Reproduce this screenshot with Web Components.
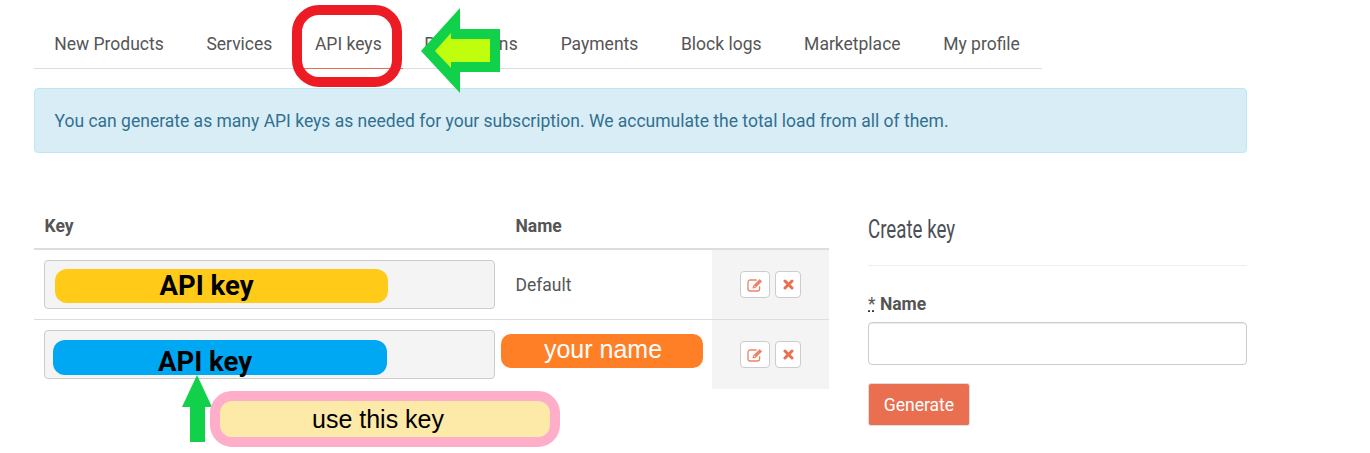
<!DOCTYPE html>
<html>
<head>
<meta charset="utf-8">
<title>API keys</title>
<style>
  html, body { margin: 0; background: #fff; }
  body { font-family: Roboto, "Liberation Sans", sans-serif; color: #555; overflow: hidden; }
</style>
</head>
<body>
<key-page></key-page>

<script>
class TabNav extends HTMLElement {
  constructor() {
    super();
    const shadowRoot = this.attachShadow({ mode: 'open' });
    const tabs = ['New Products', 'Services', 'API keys', 'Promotions', 'Payments', 'Block logs', 'Marketplace', 'My profile'];
    shadowRoot.innerHTML = `
      <style>
        :host {
          display: flex;
          width: 1008px;
          height: 69px;
          box-sizing: border-box;
          border-bottom: 1px solid #ddd;
        }
        a {
          display: block;
          box-sizing: border-box;
          height: 69px;
          padding: 34px 21.3px 0;
          font-size: 17.5px;
          line-height: 21px;
          color: #555;
          white-space: nowrap;
        }
        a:first-of-type { padding-left: 20.3px; }
        a.active { border-bottom: 1px solid #e96f50; }
        a.wide { letter-spacing: .3px; }
      </style>
      ${tabs.map(t => `<a class="${t === 'API keys' ? 'active' : t === 'Promotions' ? 'wide' : ''}">${t}</a>`).join('')}
    `;
  }
}

class InfoAlert extends HTMLElement {
  constructor() {
    super();
    const shadowRoot = this.attachShadow({ mode: 'open' });
    shadowRoot.innerHTML = `
      <style>
        :host {
          display: block;
          box-sizing: border-box;
          width: 1213px;
          height: 65px;
          margin-top: 19px;
          padding: 22px 19.5px;
          background: #d9edf7;
          border: 1px solid #bce8f1;
          border-radius: 4px;
          color: #31708f;
          font-size: 17.5px;
          line-height: 21px;
        }
      </style>
      <slot></slot>
    `;
  }
}

class KeyBox extends HTMLElement {
  constructor() {
    super();
    const shadowRoot = this.attachShadow({ mode: 'open' });
    shadowRoot.innerHTML = `
      <style>
        :host {
          display: block;
          box-sizing: border-box;
          width: 451px;
          height: 49px;
          background: #f4f4f4;
          border: 1px solid #ccc;
          border-radius: 4px;
        }
        div {
          box-sizing: border-box;
          width: 333px;
          height: 34px;
          margin: 8px 0 0 10px;
          padding-right: 30px;
          border-radius: 12px;
          background: var(--pill, #ffca18);
          color: #000;
          font: 700 27.5px/34px Roboto, "Liberation Sans", sans-serif;
          text-align: center;
        }
        :host([blue]) div { --pill: #00a8f3; height: 35px; margin: 9px 0 0 8px; width: 334px; line-height: 43px; }
      </style>
      <div><slot></slot></div>
    `;
  }
}

class IconButtons extends HTMLElement {
  constructor() {
    super();
    const shadowRoot = this.attachShadow({ mode: 'open' });
    shadowRoot.innerHTML = `
      <style>
        :host { display: flex; gap: 5px; }
        button {
          display: flex;
          align-items: center;
          justify-content: center;
          box-sizing: border-box;
          height: 27px;
          padding: 0;
          background: #fff;
          border: 1px solid #ccc;
          border-radius: 4px;
        }
        .edit { width: 30px; }
        .del { width: 26px; }
        svg { display: block; }
      </style>
      <button class="edit">
        <svg width="17" height="14" viewBox="0 0 17 14" fill="none">
          <path d="M12.6 8.2v2.6a2.2 2.2 0 0 1-2.2 2.2H3.2A2.2 2.2 0 0 1 1 10.800V4.200A2.200 2.200 0 0 1 3.200 2h6.500" stroke="#ee8269" stroke-width="1.300"/>
          <path d="M6 7.700 12.700 1l2.400 2.400-6.700 6.700-2.900.4z" fill="#ee8269"/>
          <path d="M7 7.800l1.300 1.300" stroke="#fff" stroke-width=".8"/>
        </svg>
      </button>
      <button class="del">
        <svg width="11" height="11" viewBox="0 0 11 11">
          <path d="M2 2l7 7M9 2l-7 7" stroke="#e96f50" stroke-width="3" stroke-linecap="round"/>
        </svg>
      </button>
    `;
  }
}

class KeyTable extends HTMLElement {
  constructor() {
    super();
    const shadowRoot = this.attachShadow({ mode: 'open' });
    shadowRoot.innerHTML = `
      <style>
        :host {
          display: grid;
          grid-template-columns: 471px 207px 117px;
          grid-template-rows: 35px 70px 69px;
          width: 795px;
          font-size: 17.5px;
        }
        .head {
          box-sizing: border-box;
          padding: 1px 10.5px 0;
          font-weight: 700;
          line-height: 21px;
          border-bottom: 2px solid #ddd;
          color: #555;
        }
        .cell {
          box-sizing: border-box;
          display: flex;
          align-items: center;
          padding: 0 10.5px;
        }
        .key { padding-left: 10px; padding-right: 10px; }
        .line { border-bottom: 1px solid #ddd; }
        .acts { background: #f4f4f4; justify-content: center; padding: 0; }
        .orange {
          box-sizing: border-box;
          flex: none;
          width: 202px;
          height: 34px;
          margin: -7px 0 0 -15px;
          padding-left: 3px;
          background: #ff7f27;
          border-radius: 10px;
          color: #fff;
          font: 400 25px/31px "Liberation Sans", Arial, sans-serif;
          text-align: center;
        }
      </style>
      <div class="head">Key</div>
      <div class="head">Name</div>
      <div class="head"></div>

      <div class="cell line key"><key-box>API key</key-box></div>
      <div class="cell line">Default</div>
      <div class="cell line acts"><icon-buttons></icon-buttons></div>

      <div class="cell key"><key-box blue>API key</key-box></div>
      <div class="cell"><div class="orange">your name</div></div>
      <div class="cell acts"><icon-buttons></icon-buttons></div>
    `;
  }
}

class CreateKey extends HTMLElement {
  constructor() {
    super();
    const shadowRoot = this.attachShadow({ mode: 'open' });
    shadowRoot.innerHTML = `
      <style>
        :host { display: block; width: 379px; margin-left: 39px; }
        h3 {
          margin: 0;
          height: 50px;
          font: 400 26px/28px Roboto, "Liberation Sans", sans-serif;
          color: #4b4f56;
          transform: scaleX(.72);
          transform-origin: 0 0;
          white-space: nowrap;
        }
        hr { margin: 0 0 28px; border: 0; border-top: 1px solid #eee; }
        label { display: block; font-size: 17.5px; font-weight: 700; line-height: 21px; margin-bottom: 7px; }
        abbr { font-weight: 400; text-decoration: underline dotted #333; color: #555; }
        input {
          display: block;
          box-sizing: border-box;
          width: 100%;
          height: 43px;
          background: #fff;
          border: 1px solid #ccc;
          border-radius: 4px;
          box-shadow: inset 0 1px 1px rgba(0,0,0,.075);
        }
        button {
          display: block;
          box-sizing: border-box;
          width: 102px;
          height: 43px;
          margin-top: 18px;
          padding: 0;
          background: #e96f50;
          border: 1px solid #ddd;
          border-radius: 3px;
          color: #fff;
          font: 400 17.5px Roboto, "Liberation Sans", sans-serif;
        }
      </style>
      <h3>Create key</h3>
      <hr>
      <label><abbr>*</abbr> Name</label>
      <input type="text">
      <button>Generate</button>
    `;
  }
}

/* the hand drawn marks on top of the screenshot */
class NoteLayer extends HTMLElement {
  constructor() {
    super();
    const shadowRoot = this.attachShadow({ mode: 'open' });
    shadowRoot.innerHTML = `
      <style>
        :host { position: absolute; left: 0; top: 0; width: 1370px; height: 453px; pointer-events: none; }
        svg { position: absolute; left: 0; top: 0; }
        .use {
          position: absolute;
          left: 210px;
          top: 391px;
          box-sizing: border-box;
          width: 350px;
          height: 56px;
          padding-right: 14px;
          background: #fdeaa8;
          border: 10px solid #ffaec9;
          border-radius: 22px;
          color: #000;
          font: 400 25px/36px "Liberation Sans", Arial, sans-serif;
          text-align: center;
        }
      </style>
      <svg width="1370" height="453" fill="none">
        <rect x="297" y="10" width="100" height="72" rx="22" stroke="#ed1c24" stroke-width="10"/>
        <path d="M421 51 460 8V29H500V72H460V93Z" fill="#11d14a"/>
        <path d="M435 51 451 33V39H490V62H451V68Z" fill="#bfff0e"/>
        <path d="M197 375 212 407H205V442H190V407H182Z" fill="#11d14a"/>
      </svg>
      <div class="use">use this key</div>
    `;
  }
}

class KeyPage extends HTMLElement {
  constructor() {
    super();
    const shadowRoot = this.attachShadow({ mode: 'open' });
    shadowRoot.innerHTML = `
      <style>
        :host { display: block; position: relative; width: 1370px; height: 453px; padding-left: 34px; box-sizing: border-box; }
        .row { display: flex; margin-top: 62px; width: 1213px; }
      </style>
      <tab-nav></tab-nav>
      <info-alert>You can generate as many API keys as needed for your subscription. We accumulate the total load from all of them.</info-alert>
      <div class="row">
        <key-table></key-table>
        <create-key></create-key>
      </div>
      <note-layer></note-layer>
    `;
  }
}

window.customElements.define('tab-nav', TabNav);
window.customElements.define('info-alert', InfoAlert);
window.customElements.define('key-box', KeyBox);
window.customElements.define('icon-buttons', IconButtons);
window.customElements.define('key-table', KeyTable);
window.customElements.define('create-key', CreateKey);
window.customElements.define('note-layer', NoteLayer);
window.customElements.define('key-page', KeyPage);
</script>
</body>
</html>
